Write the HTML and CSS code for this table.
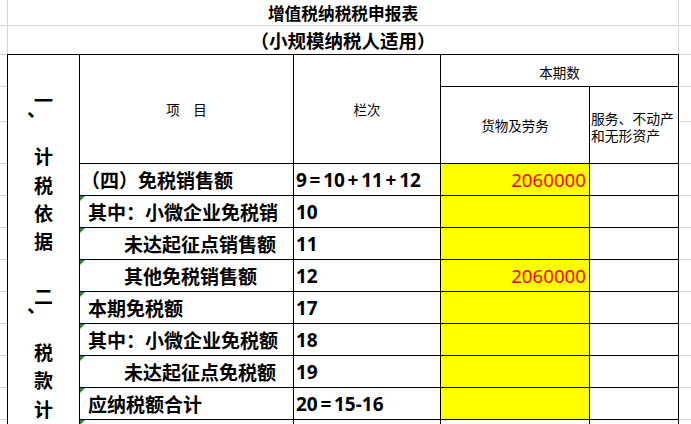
FILE: index.html
```html
<!DOCTYPE html>
<html lang="zh-CN">
<head>
<meta charset="utf-8">
<title>增值税纳税申报表</title>
<link rel="stylesheet" href="styles.css">
</head>
<body>
<div class="sheet">
  <div class="trow t1">
    <div class="tg"></div>
    <div class="tcell title">增值税纳税税申报表</div>
    <div class="tg-r"></div>
  </div>
  <div class="trow t2">
    <div class="tg"></div>
    <div class="tcell subtitle">（小规模纳税人适用）</div>
    <div class="tg-r"></div>
  </div>
  <div class="main">
    <div class="gutter">
      <div class="g g1"></div><div class="g g2"></div><div class="g g3"></div>
      <div class="g"></div><div class="g"></div><div class="g"></div><div class="g"></div><div class="g"></div>
      <div class="g"></div><div class="g"></div><div class="g"></div><div class="g"></div>
    </div>
    <div class="grid">
      <div class="side">
        <div class="grp grp1">
          <div class="ch">一</div><div class="ch"><span class="dun">、</span></div><div class="ch">计</div><div class="ch">税</div><div class="ch">依</div><div class="ch">据</div>
        </div>
        <div class="grp grp2">
          <div class="ch">二</div><div class="ch"><span class="dun">、</span></div><div class="ch">税</div><div class="ch">款</div><div class="ch">计</div><div class="ch">算</div>
        </div>
      </div>
      <div class="hd h-item">项　目</div>
      <div class="hd h-no">栏次</div>
      <div class="hd h-cur">本期数</div>
      <div class="hd h-goods">货物及劳务</div>
      <div class="hd h-svc">服务、不动产<br>和无形资产</div>

      <div class="c item p0">（四）免税销售额</div>
      <div class="c no">9<span class="op">=</span>10<span class="op">+</span>11<span class="op">+</span>12</div>
      <div class="c val">2060000</div>
      <div class="c"></div>

      <div class="c item mark">其中：小微企业免税销</div>
      <div class="c no">10</div>
      <div class="c val"></div>
      <div class="c"></div>

      <div class="c item mark in">未达起征点销售额</div>
      <div class="c no">11</div>
      <div class="c val"></div>
      <div class="c"></div>

      <div class="c item mark in">其他免税销售额</div>
      <div class="c no">12</div>
      <div class="c val">2060000</div>
      <div class="c"></div>

      <div class="c item mark">本期免税额</div>
      <div class="c no">17</div>
      <div class="c val"></div>
      <div class="c"></div>

      <div class="c item mark">其中：小微企业免税额</div>
      <div class="c no">18</div>
      <div class="c val"></div>
      <div class="c"></div>

      <div class="c item mark in">未达起征点免税额</div>
      <div class="c no">19</div>
      <div class="c val"></div>
      <div class="c"></div>

      <div class="c item mark">应纳税额合计</div>
      <div class="c no">20<span class="op">=</span>15-16</div>
      <div class="c val"></div>
      <div class="c"></div>

      <div class="c item mark"></div>
      <div class="c no"></div>
      <div class="c"></div>
      <div class="c"></div>
    </div>
    <div class="gutter right">
      <div class="g g1"></div><div class="g g2"></div><div class="g g3"></div>
      <div class="g"></div><div class="g"></div><div class="g"></div><div class="g"></div><div class="g"></div>
      <div class="g"></div><div class="g"></div><div class="g"></div><div class="g"></div>
    </div>
  </div>
</div>
</body>
</html>
```
FILE: styles.css
```css
html, body {
  margin: 0;
  padding: 0;
  background: #fff;
  overflow: hidden;
}

body {
  width: 691px;
  height: 424px;
  font-family: "Noto Sans CJK SC", sans-serif;
  color: #000;
}

.sheet {
  display: flex;
  flex-direction: column;
}

/* title rows */
.trow {
  display: flex;
}

.t1 {
  height: 26px;
  box-sizing: border-box;
  border-bottom: 1px solid #d4d4d4;
}

.t2 {
  height: 28px;
}

.tg {
  width: 7px;
  flex: none;
}

.tg-r {
  flex: 1;
}

.tcell {
  width: 672px;
  flex: none;
  box-sizing: border-box;
  border-left: 1px solid #d4d4d4;
  border-right: 1px solid #d4d4d4;
  text-align: center;
  font-weight: 700;
  white-space: nowrap;
}

.title {
  font-size: 16.7px;
  line-height: 25px;
  padding-top: 1px;
  box-sizing: border-box;
}

.subtitle {
  font-size: 18.5px;
  line-height: 28px;
}

/* main area */
.main {
  display: flex;
  align-items: flex-start;
}

.gutter {
  width: 7px;
  flex: none;
  border-top: 1px solid #d4d4d4;
  display: flex;
  flex-direction: column;
}

.gutter.right {
  flex: 1;
}

.g {
  height: 31px;
  border-bottom: 1px solid #d4d4d4;
  flex: none;
}

.g.g1 { height: 31px; }
.g.g2 { height: 34px; }
.g.g3 { height: 41px; }

.grid {
  width: 672px;
  flex: none;
  box-sizing: border-box;
  border: 1px solid #000;
  background: #000;
  display: grid;
  grid-template-columns: 71px 213px 146px 148px 88px;
  grid-template-rows: 31px 76px repeat(9, 31px);
  gap: 1px;
}

.grid > div {
  background: #fff;
}

/* left merged column */
.side {
  grid-column: 1;
  grid-row: 1 / -1;
  display: flex;
  flex-direction: column;
  font-weight: 700;
  font-size: 19px;
}

.grp {
  display: flex;
  flex-direction: column;
  align-items: center;
  box-sizing: border-box;
}

.grp1 {
  height: 236px;
  padding-top: 31px;
}

.grp2 {
  padding-top: 10px;
}

.ch {
  height: 28.2px;
  line-height: 28.2px;
  width: 19px;
  text-align: center;
}

.dun {
  display: inline-block;
  transform: translate(-7px, -19px);
}

/* headers */
.hd {
  font-size: 13.5px;
  display: flex;
  align-items: center;
  justify-content: center;
  white-space: nowrap;
}

.h-item { grid-column: 2; grid-row: 1 / 3; }
.h-no { grid-column: 3; grid-row: 1 / 3; }
.h-cur { grid-column: 4 / 6; grid-row: 1; padding-top: 2px; box-sizing: border-box; }
.h-goods { grid-column: 4; grid-row: 2; }

.h-svc {
  grid-column: 5;
  grid-row: 2;
  justify-content: flex-start;
  text-align: left;
  line-height: 17px;
  font-size: 13.8px;
  padding-left: 1px;
  padding-top: 3px;
  box-sizing: border-box;
}

/* data cells */
.c {
  display: flex;
  align-items: center;
  white-space: nowrap;
}

.item {
  position: relative;
  font-size: 19px;
  font-weight: 700;
  padding-left: 8px;
}

.item.p0 { padding-left: 1px; }
.item.in { padding-left: 44px; }

.item.mark::before {
  content: "";
  position: absolute;
  top: 0;
  left: 0;
  border-top: 5px solid #1f8f2f;
  border-right: 5px solid transparent;
}

.no {
  font-family: "Noto Sans", "Noto Sans CJK SC", sans-serif;
  font-weight: 700;
  font-size: 19px;
  padding-left: 2px;
}

.op {
  margin: 0 2.7px;
}

.grid > .val {
  background: #ffff00;
  justify-content: flex-end;
  padding-right: 3px;
  color: #ff0000;
  font-family: "Noto Sans", sans-serif;
  font-size: 18.7px;
}
```
